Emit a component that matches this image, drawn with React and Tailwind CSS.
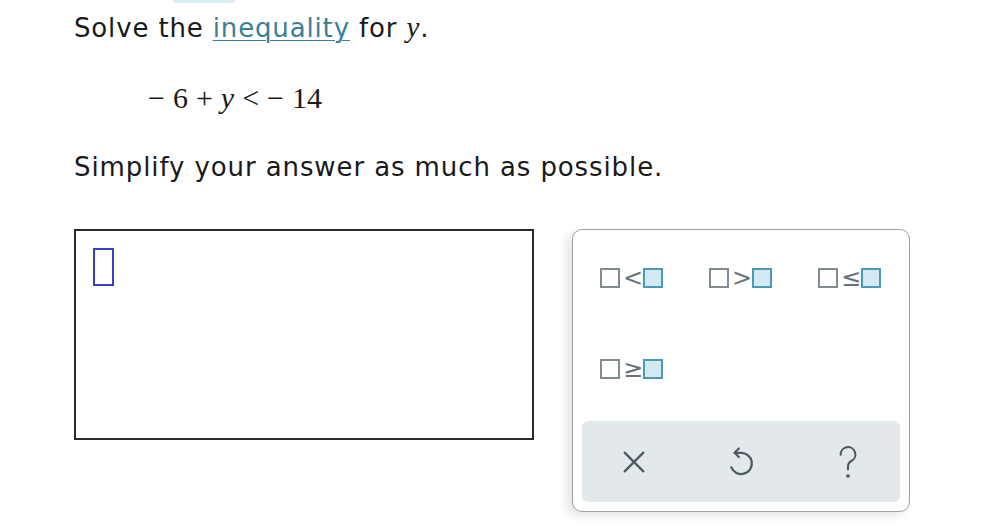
import React from "react";

function Tmpl({ sym }) {
  return (
    <div className="flex items-center gap-[3px]">
      <span className="block w-[20px] h-[20px] border-[2.5px] border-[#808c90] bg-white"></span>
      <span className="text-[24px] leading-none text-[#66747a] font-['DejaVu_Sans',sans-serif] w-[17px] text-center">{sym}</span>
      <span className="block w-[20px] h-[20px] border-[2.5px] border-[#4a9ab6] bg-[#d4eaf3]"></span>
    </div>
  );
}

export default function App() {
  return (
    <div className="relative w-[1000px] h-[529px] bg-white overflow-hidden font-['DejaVu_Sans',sans-serif] text-[#1a1a1a]">
      <div className="absolute left-[172px] top-[-6px] w-[64px] h-[9px] rounded-full bg-[#d9eef4]"></div>
      <div className="pl-[74px] pt-[9px]">
        <p className="text-[26px] leading-[36px] tracking-[0.85px]">
          Solve the{" "}
          <span className="text-[#3a7f98] underline decoration-[#3a7f98] decoration-1 underline-offset-[3px]">inequality</span>{" "}
          for <span className="font-['Liberation_Serif',serif] italic text-[29px]">y</span>.
        </p>
        <div className="ml-[74px] mt-[34px] h-[36px] flex items-center gap-[8px] font-['Liberation_Serif',serif] text-[30px] leading-[36px] text-[#1a1a1a]">
          <span>−</span>
          <span>6</span>
          <span>+</span>
          <span className="italic">y</span>
          <span>&lt;</span>
          <span>−</span>
          <span>14</span>
        </div>
        <p className="mt-[33px] text-[26px] leading-[36px] tracking-[0.9px]">Simplify your answer as much as possible.</p>
        <div className="mt-[44px] flex items-start gap-[38px]">
          <div className="w-[460px] h-[211px] border-2 border-[#2a2a2a] pl-[17px] pt-[17px]">
            <div className="w-[21px] h-[38px] border-2 border-[#3a3ad0]"></div>
          </div>
          <div className="w-[338px] h-[283px] rounded-[10px] border-[1.5px] border-[#98a3a8] bg-white shadow-[-6px_4px_10px_rgba(0,0,0,0.10)] flex flex-col px-[9px] pb-[9px]">
            <div className="grid grid-cols-[109px_109px_109px] content-start gap-y-[67px] pl-[18px] pt-[36px] flex-1">
              <Tmpl sym="<" />
              <Tmpl sym=">" />
              <Tmpl sym="≤" />
              <Tmpl sym="≥" />
            </div>
            <div className="h-[81px] rounded-[6px] bg-[#e3e8eb] flex items-center justify-center gap-[74px]">
              <svg width="32" height="32" viewBox="0 0 24 24" fill="none" stroke="#4b5b61" strokeWidth="1.7" strokeLinecap="round">
                <path d="M5 5L19 19M19 5L5 19" />
              </svg>
              <svg width="34" height="34" viewBox="0 0 24 24" fill="none" stroke="#4b5b61" strokeWidth="1.6" strokeLinecap="round" strokeLinejoin="round">
                <path d="M10.5 2.5L7.5 5.5L10.5 8.5" />
                <path d="M7.5 5.5H12A7.5 7.5 0 1 1 5.2 15.8" />
              </svg>
              <svg width="32" height="38" viewBox="0 0 24 28" fill="none" stroke="#4b5b61" strokeWidth="1.6" strokeLinecap="round">
                <path d="M6.5 8.5A5.5 5.5 0 1 1 14.5 13.2C12.8 14.3 12 15.3 12 17.2V19.5" />
                <circle cx="12" cy="24.5" r="0.6" fill="#4b5b61" />
              </svg>
            </div>
          </div>
        </div>
      </div>
    </div>
  );
}
